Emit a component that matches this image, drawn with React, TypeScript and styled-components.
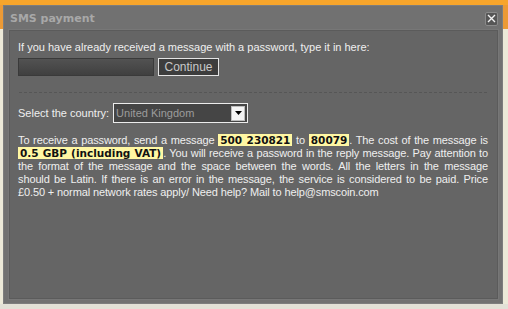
import styled, { createGlobalStyle } from 'styled-components';

const GlobalStyle = createGlobalStyle`
    html, body {
        margin: 0;
        padding: 0;
        width: 508px;
        height: 309px;
        overflow: hidden;
        background: #ece9d8;
    }
`;

const Page = styled.div`
    width: 508px;
    height: 309px;
    box-sizing: border-box;
    border-top: 5px solid #f7a52b;
    border-bottom: 5px solid #e2e0d6;
    padding: 0 5px 0 3px;
    background: linear-gradient(to bottom, #ec9a35 0, #ec9a35 24px, #ece9d8 24px);
`;

const Dialog = styled.div`
    height: 299px;
    box-sizing: border-box;
    display: flex;
    flex-direction: column;
    background: #717171;
    border: 1px solid #7d7d7d;
    padding: 0 4px 4px 5px;
    font-family: 'Liberation Sans', Arial, sans-serif;
`;

const TitleBar = styled.div`
    height: 24px;
    display: flex;
    align-items: center;
    justify-content: space-between;
`;

const Title = styled.span`
    font-family: 'DejaVu Sans', Verdana, sans-serif;
    font-weight: bold;
    font-size: 11px;
    color: #a8a8a8;
    margin-left: 1px;
`;

const CloseButton = styled.button`
    width: 13px;
    height: 14px;
    padding: 0;
    margin: 1px 0 0 0;
    border: 1px solid #8a8a8a;
    border-radius: 2px;
    background: #565656;
    display: flex;
    align-items: center;
    justify-content: center;
`;

const Panel = styled.div`
    flex: 1;
    background: #656565;
    border: 1px solid #5b5b5b;
    box-shadow: 0 0 0 1px #777777;
    padding: 10px 9px 0 8px;
    color: #efefef;
    font-size: 11px;
    line-height: 13px;
`;

const Label = styled.div``;

const InputRow = styled.div`
    display: flex;
    gap: 4px;
    margin-top: 4px;
`;

const PasswordInput = styled.div`
    width: 136px;
    height: 18px;
    box-sizing: border-box;
    border: 1px solid #3a3a3a;
    background: linear-gradient(to bottom, #525252, #404040);
`;

const ContinueButton = styled.div`
    width: 61px;
    height: 18px;
    box-sizing: border-box;
    border: 1px solid #e4e4e4;
    background: #3d3d3d;
    color: #c9c9c9;
    font-size: 12px;
    line-height: 16px;
    text-align: center;
`;

const Divider = styled.hr`
    margin: 16px 1px 0 1px;
    border: none;
    border-top: 1px dashed #565656;
    height: 0;
`;

const CountryRow = styled.div`
    display: flex;
    align-items: center;
    gap: 4px;
    margin-top: 10px;
`;

const Select = styled.div`
    width: 135px;
    height: 20px;
    box-sizing: border-box;
    border: 1px solid #ececec;
    background: #454545;
    display: flex;
    align-items: center;
    justify-content: space-between;
    padding: 0 2px;
    color: #9c9c9c;
    font-size: 11px;
`;

const Arrow = styled.span`
    width: 14px;
    height: 15px;
    box-sizing: border-box;
    background: #f4f4f4;
    border: 1px solid #bdbdbd;
    display: flex;
    align-items: center;
    justify-content: center;
`;

const Info = styled.div`
    margin-top: 11px;
    letter-spacing: -0.12px;
`;

// the original wraps at fixed points, so each line is justified on its own
const InfoLine = styled.div<{ $last?: boolean }>`
    white-space: nowrap;
    text-align: justify;
    text-align-last: ${(p) => (p.$last ? 'left' : 'justify')};
`;

const Mark = styled.b`
    font-family: 'DejaVu Sans', Verdana, sans-serif;
    font-size: 10.5px;
    letter-spacing: 0;
    background: #fff7a3;
    color: #111;
    padding: 0 2px;
`;

export default function App() {
    return (
        <>
            <GlobalStyle />
            <Page>
                <Dialog>
                    <TitleBar>
                        <Title>SMS payment</Title>
                        <CloseButton aria-label="close">
                            <svg width="9" height="9" viewBox="0 0 9 9">
                                <path d="M1 1 L8 8 M8 1 L1 8" stroke="#f2f2f2" strokeWidth="1.4" />
                            </svg>
                        </CloseButton>
                    </TitleBar>
                    <Panel>
                        <Label>If you have already received a message with a password, type it in here:</Label>
                        <InputRow>
                            <PasswordInput />
                            <ContinueButton>Continue</ContinueButton>
                        </InputRow>
                        <Divider />
                        <CountryRow>
                            <Label>Select the country:</Label>
                            <Select>
                                <span>United Kingdom</span>
                                <Arrow>
                                    <svg width="7" height="4" viewBox="0 0 7 4">
                                        <path d="M0 0 H7 L3.5 4 Z" fill="#000" />
                                    </svg>
                                </Arrow>
                            </Select>
                        </CountryRow>
                        <Info>
                            <InfoLine>
                                To receive a password, send a message <Mark>500 230821</Mark> to <Mark>80079</Mark>. The
                                cost of the message is
                            </InfoLine>
                            <InfoLine>
                                <Mark>0.5 GBP (including VAT)</Mark>. You will receive a password in the reply message.
                                Pay attention to
                            </InfoLine>
                            <InfoLine>
                                the format of the message and the space between the words. All the letters in the message
                            </InfoLine>
                            <InfoLine>
                                should be Latin. If there is an error in the message, the service is considered to be paid.
                                Price
                            </InfoLine>
                            <InfoLine $last>£0.50 + normal network rates apply/ Need help? Mail to help@smscoin.com</InfoLine>
                        </Info>
                    </Panel>
                </Dialog>
            </Page>
        </>
    );
}
